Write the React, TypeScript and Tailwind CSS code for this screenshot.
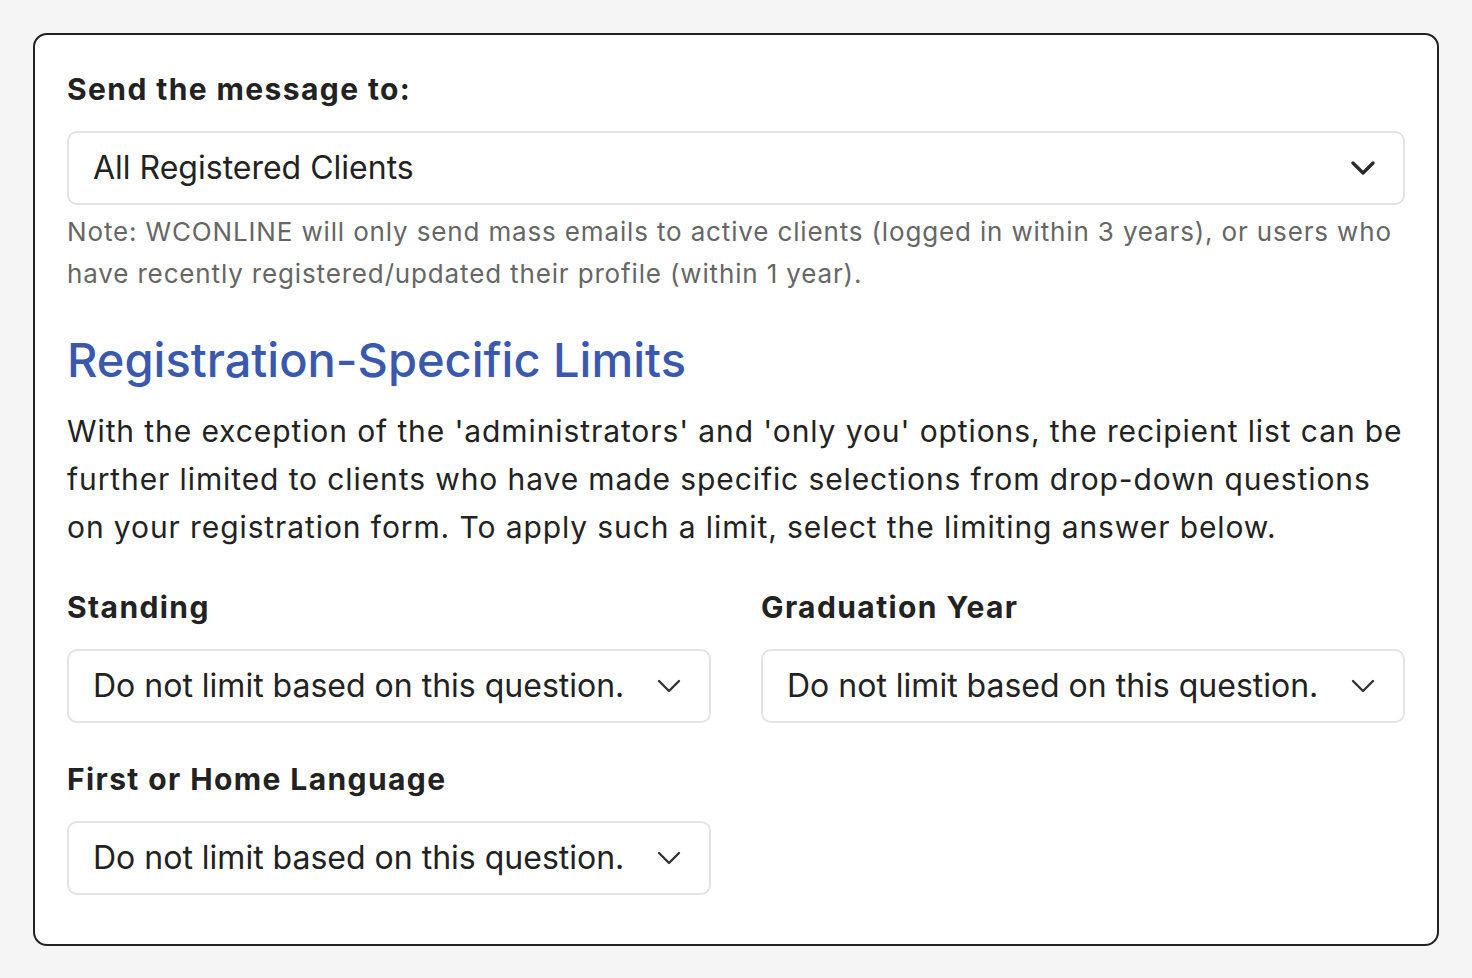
function Chevron({ bold }: { bold?: boolean }) {
  return (
    <svg width="24" height="14" viewBox="0 0 24 14" fill="none" className="shrink-0">
      <polyline
        points="2,2 12,12 22,2"
        stroke={bold ? '#2b2b2b' : '#333'}
        strokeWidth={bold ? 3.4 : 2.4}
        strokeLinecap="round"
        strokeLinejoin="round"
      />
    </svg>
  )
}

function SelectBox({ value, bold }: { value: string; bold?: boolean }) {
  return (
    <div className="flex h-[74px] items-center justify-between rounded-[10px] border-2 border-[#e3e3e3] bg-white pl-[24px] pr-[28px]">
      <span className="text-[32px] leading-[40px] text-[#222]">{value}</span>
      <Chevron bold={bold} />
    </div>
  )
}

function Field({ label, value }: { label: string; value: string }) {
  return (
    <div className="flex flex-col gap-[24px]">
      <div className="text-[30px] font-bold leading-[36px] tracking-[1.4px] text-[#222]">{label}</div>
      <SelectBox value={value} />
    </div>
  )
}

export default function App() {
  const none = 'Do not limit based on this question.'
  return (
    <div
      className="min-h-screen bg-[#f5f5f5] px-[33px] pt-[33px] pb-[32px]"
      style={{ fontFamily: 'Inter, "Noto Sans", sans-serif' }}
    >
      <div className="rounded-[14px] border-2 border-[#222] bg-white px-[32px] pt-[34px] pb-[49px]">
        <div className="text-[30px] font-bold leading-[40px] tracking-[1.4px] text-[#222]">
          Send the message to:
        </div>
        <div className="mt-[22px]">
          <SelectBox value="All Registered Clients" bold />
        </div>
        <p className="mt-[6px] text-[26px] leading-[42px] tracking-[0.85px] text-[#666]">
          Note: WCONLINE will only send mass emails to active clients (logged in within 3 years), or users who
          have recently registered/updated their profile (within 1 year).
        </p>
        <h2 className="mt-[35px] text-[47px] font-medium leading-[60px] text-[#3a59ad]">
          Registration-Specific Limits
        </h2>
        <p className="mt-[17px] text-[30px] leading-[48px] tracking-[0.9px] text-[#222]">
          With the exception of the 'administrators' and 'only you' options, the recipient list can be further
          limited to clients who have made specific selections from drop-down questions on your registration
          form. To apply such a limit, select the limiting answer below.
        </p>
        <div className="mt-[38px] grid grid-cols-2 gap-x-[50px] gap-y-[38px]">
          <Field label="Standing" value={none} />
          <Field label="Graduation Year" value={none} />
          <Field label="First or Home Language" value={none} />
        </div>
      </div>
    </div>
  )
}
